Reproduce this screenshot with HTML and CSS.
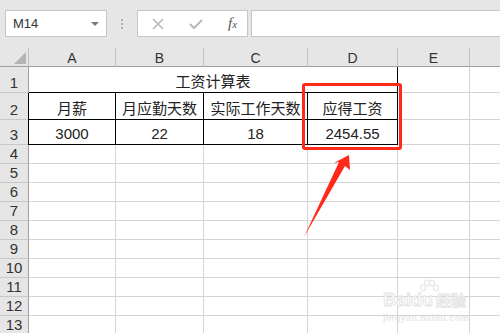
FILE: index.html
```html
<!DOCTYPE html>
<html>
<head>
<meta charset="utf-8">
<link rel="stylesheet" href="styles.css">
</head>
<body>
<div class="app">
  <div class="toolbar">
    <div class="namebox"><span>M14</span><span class="caret"></span></div>
    <div class="dots"><i></i><i></i><i></i></div>
    <div class="fbtns">
      <svg class="ic" width="14" height="14" viewBox="0 0 14 14"><path d="M2 2L12 12M12 2L2 12" stroke="#b9b9b9" stroke-width="1.6" fill="none"/></svg>
      <svg class="ic" width="16" height="14" viewBox="0 0 16 14"><path d="M2 7L6 11L14 3" stroke="#b9b9b9" stroke-width="2" fill="none"/></svg>
      <span class="fx">f<sub>x</sub></span>
    </div>
    <div class="finput"></div>
  </div>
  <div class="sheet">
    <div class="corner"><span class="tri"></span></div>
    <div class="ch">A</div><div class="ch">B</div><div class="ch">C</div><div class="ch">D</div><div class="ch">E</div><div class="ch last"></div>

    <div class="rh r1">1</div>
    <div class="c title">工资计算表</div>
    <div class="c"></div><div class="c last"></div>

    <div class="rh r2">2</div>
    <div class="c t tl">月薪</div><div class="c t">月应勤天数</div><div class="c t">实际工作天数</div><div class="c t">应得工资</div>
    <div class="c"></div><div class="c last"></div>

    <div class="rh r3">3</div>
    <div class="c t tl num">3000</div><div class="c t num">22</div><div class="c t num">18</div><div class="c t num">2454.55</div>
    <div class="c"></div><div class="c last"></div>

    <div class="rh">4</div><div class="c"></div><div class="c"></div><div class="c"></div><div class="c"></div><div class="c"></div><div class="c last"></div>
    <div class="rh">5</div><div class="c"></div><div class="c"></div><div class="c"></div><div class="c"></div><div class="c"></div><div class="c last"></div>
    <div class="rh">6</div><div class="c"></div><div class="c"></div><div class="c"></div><div class="c"></div><div class="c"></div><div class="c last"></div>
    <div class="rh">7</div><div class="c"></div><div class="c"></div><div class="c"></div><div class="c"></div><div class="c"></div><div class="c last"></div>
    <div class="rh">8</div><div class="c"></div><div class="c"></div><div class="c"></div><div class="c"></div><div class="c"></div><div class="c last"></div>
    <div class="rh">9</div><div class="c"></div><div class="c"></div><div class="c"></div><div class="c"></div><div class="c"></div><div class="c last"></div>
    <div class="rh">10</div><div class="c"></div><div class="c"></div><div class="c"></div><div class="c"></div><div class="c"></div><div class="c last"></div>
    <div class="rh">11</div><div class="c"></div><div class="c"></div><div class="c"></div><div class="c"></div><div class="c"></div><div class="c last"></div>
    <div class="rh">12</div><div class="c"></div><div class="c"></div><div class="c"></div><div class="c"></div><div class="c"></div><div class="c last"></div>
    <div class="rh">13</div><div class="c"></div><div class="c"></div><div class="c"></div><div class="c"></div><div class="c"></div><div class="c last"></div>
  </div>

  <div class="highlight"></div>
  <svg class="arrow" width="500" height="333" viewBox="0 0 500 333">
    <path d="M349 155 L350 170 L345 166 L304 237 L339 162 L334 163 Z" fill="#ff2a1a"/>
  </svg>
  <svg class="paw" width="22" height="20" viewBox="0 0 22 20">
    <g fill="none" stroke="#e6e6e6" stroke-width="1.2">
      <ellipse cx="5" cy="9" rx="2.5" ry="3"/>
      <ellipse cx="9" cy="4" rx="2.5" ry="3"/>
      <ellipse cx="14" cy="4" rx="2.5" ry="3"/>
      <ellipse cx="18" cy="9" rx="2.5" ry="3"/>
    </g>
  </svg>
  <div class="wm">
    <div class="wm-top"><span class="wm-bai">Bai</span><span class="wm-du">du</span><span class="wm-jy">经验</span></div>
    <div class="wm-url">jingyan.baidu.com</div>
  </div>
</div>
</body>
</html>
```
FILE: styles.css
```css
html, body { margin: 0; padding: 0; }
body { width: 500px; height: 333px; overflow: hidden; background: #fff; font-family: "Liberation Sans", "Noto Sans CJK SC", sans-serif; }
.app { position: relative; width: 500px; height: 333px; overflow: hidden; }

.toolbar { height: 48px; background: #e6e6e6; display: flex; align-items: flex-start; padding-top: 10px; box-sizing: border-box; }
.namebox { margin-left: 5px; width: 102px; height: 27px; box-sizing: border-box; background: #fff; border: 1px solid #c6c6c6; display: flex; align-items: center; justify-content: space-between; padding: 0 7px 0 7px; font-size: 13px; color: #333; }
.caret { width: 0; height: 0; border-left: 4px solid transparent; border-right: 4px solid transparent; border-top: 4px solid #7a7a7a; }
.dots { width: 30px; height: 27px; display: flex; flex-direction: column; align-items: center; justify-content: center; gap: 2px; }
.dots i { display: block; width: 2px; height: 2px; background: #b0b0b0; }
.fbtns { width: 111px; height: 27px; box-sizing: border-box; background: #fff; border: 1px solid #c6c6c6; display: flex; align-items: center; padding-left: 13px; gap: 23px; }
.fbtns svg { display: block; }
.fx { font-family: "Liberation Serif", serif; font-style: italic; font-size: 15px; color: #555; margin-left: 1px; }
.fx sub { font-size: 11px; vertical-align: 0; margin-left: 0; }
.finput { margin-left: 3px; flex: 1; height: 27px; box-sizing: border-box; background: #fff; border: 1px solid #c6c6c6; border-right: none; }

.sheet { display: grid; grid-template-columns: 29px 87px 88px 104px 90px 72px 1fr; grid-template-rows: 19px 26px 27px 25px repeat(10, 19px); font-size: 15px; color: #222; }
.corner { background: #e6e6e6; border-right: 1px solid #c0c0c0; border-bottom: 1px solid #9e9e9e; box-sizing: border-box; position: relative; }
.tri { position: absolute; left: 14px; top: 4px; width: 0; height: 0; border-left: 12px solid transparent; border-bottom: 12px solid #b4b4b4; }
.ch { background: #e6e6e6; border-right: 1px solid #c0c0c0; border-bottom: 1px solid #9e9e9e; box-sizing: border-box; display: flex; align-items: center; justify-content: center; font-size: 14px; color: #333; padding-top: 1px; }
.ch.last { border-right: none; }
.rh { background: #e6e6e6; border-right: 1px solid #9e9e9e; border-bottom: 1px solid #c8c8c8; box-sizing: border-box; display: flex; align-items: flex-end; justify-content: center; font-size: 15px; color: #333; line-height: 18px; }
.c { border-right: 1px solid #d4d4d4; border-bottom: 1px solid #d4d4d4; box-sizing: border-box; display: flex; align-items: center; justify-content: center; white-space: nowrap; }
.c.last { border-right: none; }
.title { grid-column: span 4; border-right: 1px solid #000; border-bottom: 1px solid #000; font-family: "Noto Sans CJK SC", sans-serif; font-size: 15px; padding-top: 1px; }
.t { border-right: 1px solid #000; border-bottom: 1px solid #000; font-family: "Noto Sans CJK SC", sans-serif; font-size: 15px; padding-top: 3px; }
.t.num { font-family: "Liberation Sans", sans-serif; padding-top: 3px; }
.tl { margin-left: -1px; border-left: 1px solid #000; }

.highlight { position: absolute; left: 302px; top: 83px; width: 100px; height: 67px; box-sizing: border-box; border: 3px solid #ff2a1a; border-radius: 3px; }
.arrow { position: absolute; left: 0; top: 0; }

.paw { position: absolute; left: 418px; top: 279px; }
.wm { position: absolute; left: 383px; top: 291px; font-family: "Liberation Sans", "Noto Sans CJK SC", sans-serif; }
.wm-top { display: flex; align-items: baseline; font-size: 18px; font-weight: bold; line-height: 18px; }
.wm-bai, .wm-du, .wm-jy { color: #fcfcfc; -webkit-text-stroke: 0.8px #e2e2e2; }
.wm-jy { font-size: 15px; margin-left: 3px; }
.wm-url { font-size: 9px; font-weight: bold; color: #e8e8e8; margin-top: 3px; letter-spacing: 0.4px; }
```
